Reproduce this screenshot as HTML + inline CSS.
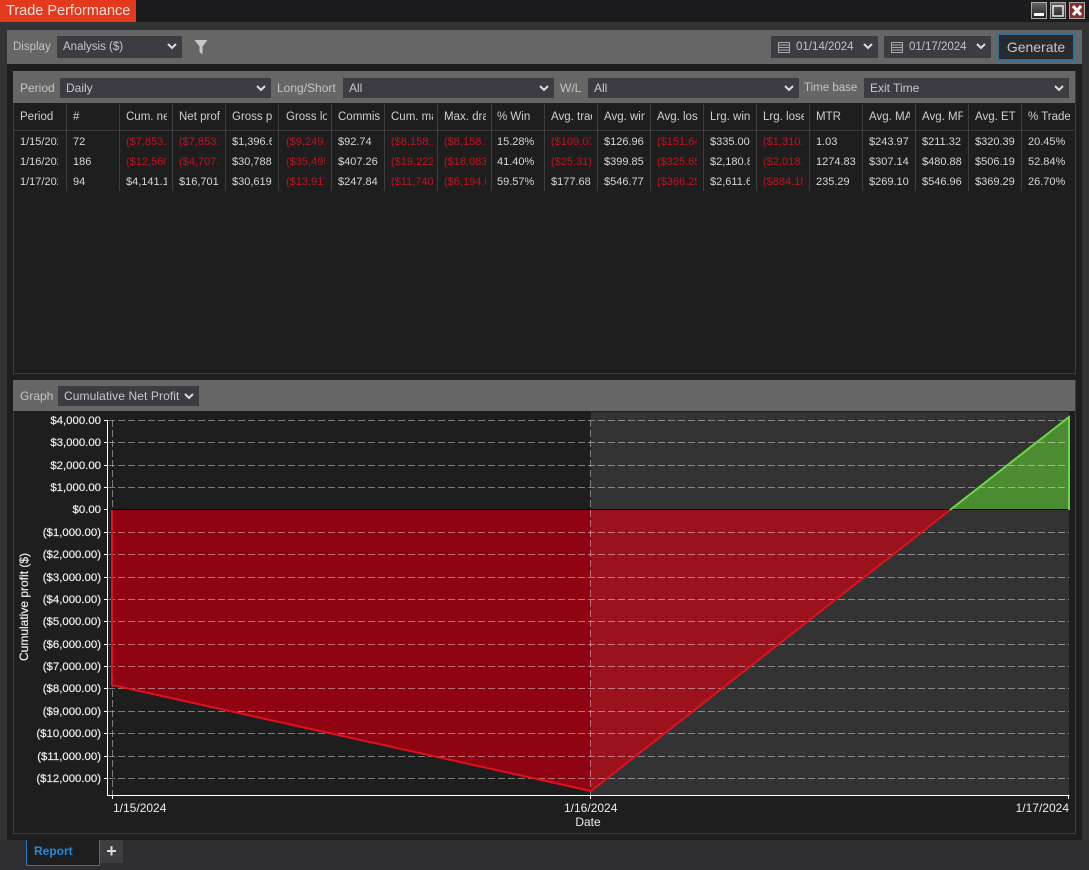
<!DOCTYPE html>
<html><head><meta charset="utf-8">
<style>
html,body{margin:0;padding:0}
body{width:1089px;height:870px;position:relative;overflow:hidden;background:#2e2e30;font-family:"Liberation Sans",sans-serif;font-size:12px;color:#dcdcdc}
.a{position:absolute}
.sel{position:absolute;background:#3c3c42;height:20px;line-height:20px;color:#c8c8c8;box-sizing:border-box;padding-left:6px}
.sel svg{position:absolute;right:4px;top:6px}
.lbl{position:absolute;color:#c4c4c4;line-height:20px}
.bar{position:absolute;background:#666}
.c{position:absolute;height:20px;line-height:20px;margin-top:1px;overflow:hidden;white-space:nowrap;color:#d6d6d6;font-size:11px}
.h{color:#cfcfcf;font-size:11.5px}
.r{color:#c4121f}
.v{position:absolute;width:1px;background:#3e3e3e}
</style></head><body>
<div class="a" style="left:0;top:0;width:1089px;height:22px;background:#1c1c1e"></div>
<div class="a" style="left:0;top:0;width:136px;height:22px;background:#e5391c;color:#f4e2dc;font-size:14.5px;line-height:22px;text-indent:6px;white-space:nowrap">Trade Performance</div>
<svg class="a" style="left:1031px;top:2px" width="58" height="19">
<defs><linearGradient id="wb" x1="0" y1="0" x2="0" y2="1"><stop offset="0" stop-color="#666"/><stop offset="1" stop-color="#222"/></linearGradient></defs>
<rect x=".5" y=".5" width="15" height="16" fill="url(#wb)" stroke="#aaa"/><rect x="3" y="11" width="10" height="3" fill="#fff"/>
<rect x="19.5" y=".5" width="15" height="16" fill="url(#wb)" stroke="#aaa"/><rect x="22" y="4" width="10" height="10" fill="none" stroke="#eee" stroke-width="1.5"/>
<rect x="38.5" y=".5" width="15" height="16" fill="#8a2c28" stroke="#aaa"/><path d="M42 4l8 9M50 4l-8 9" stroke="#fff" stroke-width="3"/>
</svg>
<div class="a" style="left:0;top:22px;width:1089px;height:818px;background:#333"></div>
<div class="a" style="left:7px;top:30px;width:1075px;height:810px;background:#1e1e1e"></div>
<div class="bar" style="left:7px;top:30px;width:1075px;height:34px"></div>
<div class="lbl" style="left:13px;top:37px;font-size:11.5px">Display</div>
<div class="sel" style="left:57px;top:36px;width:125px;height:22px;line-height:22px;font-size:11.5px">Analysis ($)<svg width="12" height="10" style="top:6px"><path d="M2 2l4 4 4-4" fill="none" stroke="#ddd" stroke-width="2"/></svg></div>
<svg class="a" style="left:194px;top:39px" width="14" height="16"><path d="M0.5 1h13l-5 6.500v8l-3-2.500v-5.500z" fill="#c8c8c8"/></svg>
<div class="sel" style="left:771px;top:36px;width:107px;height:22px;line-height:22px;padding-left:25px;color:#c4c4c4;font-size:11.5px">01/14/2024<svg width="12" height="10" style="top:6px"><path d="M2 2l4 4 4-4" fill="none" stroke="#ddd" stroke-width="2"/></svg></div>
<svg class="a" style="left:778px;top:42px" width="12" height="11"><rect x=".5" y=".5" width="11" height="10" fill="none" stroke="#aaa"/><path d="M1 3h10M1 5.500h10M1 8h10" stroke="#aaa"/></svg>
<div class="sel" style="left:884px;top:36px;width:107px;height:22px;line-height:22px;padding-left:25px;color:#c4c4c4;font-size:11.5px">01/17/2024<svg width="12" height="10" style="top:6px"><path d="M2 2l4 4 4-4" fill="none" stroke="#ddd" stroke-width="2"/></svg></div>
<svg class="a" style="left:891px;top:42px" width="12" height="11"><rect x=".5" y=".5" width="11" height="10" fill="none" stroke="#aaa"/><path d="M1 3h10M1 5.500h10M1 8h10" stroke="#aaa"/></svg>
<div class="a" style="left:997px;top:33px;width:78px;height:28px;box-sizing:border-box;border:2px solid #2d6f9f;background:#2a2a2e;color:#c8c8c8;font-size:14px;line-height:24px;text-align:center">Generate</div>

<div class="a" style="left:13px;top:71px;width:1061px;height:301px;border:1px solid #3c3c3c;background:#1e1e1e"></div>
<div class="bar" style="left:13px;top:71px;width:1062px;height:32px"></div>
<div class="lbl" style="left:20px;top:78px">Period</div>
<div class="sel" style="left:60px;top:78px;width:211px">Daily<svg width="12" height="10"><path d="M2 2l4 4 4-4" fill="none" stroke="#ddd" stroke-width="2"/></svg></div>
<div class="lbl" style="left:277px;top:78px">Long/Short</div>
<div class="sel" style="left:343px;top:78px;width:211px">All<svg width="12" height="10"><path d="M2 2l4 4 4-4" fill="none" stroke="#ddd" stroke-width="2"/></svg></div>
<div class="lbl" style="left:560px;top:78px">W/L</div>
<div class="sel" style="left:588px;top:78px;width:211px">All<svg width="12" height="10"><path d="M2 2l4 4 4-4" fill="none" stroke="#ddd" stroke-width="2"/></svg></div>
<div class="lbl" style="left:804px;top:78px;font-size:11.5px">Time base</div>
<div class="sel" style="left:864px;top:78px;width:205px">Exit Time<svg width="12" height="10"><path d="M2 2l4 4 4-4" fill="none" stroke="#ddd" stroke-width="2"/></svg></div>
<div class="a" style="left:14px;top:130px;width:1060px;height:1px;background:#3a3a3a"></div>

<div class="v" style="left:66px;top:104px;height:87px"></div><div class="v" style="left:119px;top:104px;height:87px"></div><div class="v" style="left:172px;top:104px;height:87px"></div><div class="v" style="left:225px;top:104px;height:87px"></div><div class="v" style="left:278px;top:104px;height:87px"></div><div class="v" style="left:331px;top:104px;height:87px"></div><div class="v" style="left:384px;top:104px;height:87px"></div><div class="v" style="left:437px;top:104px;height:87px"></div><div class="v" style="left:491px;top:104px;height:87px"></div><div class="v" style="left:544px;top:104px;height:87px"></div><div class="v" style="left:597px;top:104px;height:87px"></div><div class="v" style="left:650px;top:104px;height:87px"></div><div class="v" style="left:703px;top:104px;height:87px"></div><div class="v" style="left:756px;top:104px;height:87px"></div><div class="v" style="left:809px;top:104px;height:87px"></div><div class="v" style="left:862px;top:104px;height:87px"></div><div class="v" style="left:915px;top:104px;height:87px"></div><div class="v" style="left:968px;top:104px;height:87px"></div><div class="v" style="left:1021px;top:104px;height:87px"></div>

<div class="c h" style="left:20px;top:106px;width:44px">Period</div><div class="c h" style="left:73px;top:106px;width:44px">#</div><div class="c h" style="left:126px;top:106px;width:41px">Cum. net</div><div class="c h" style="left:179px;top:106px;width:41px">Net profit</div><div class="c h" style="left:232px;top:106px;width:41px">Gross profit</div><div class="c h" style="left:286px;top:106px;width:41px">Gross loss</div><div class="c h" style="left:338px;top:106px;width:42px">Commission</div><div class="c h" style="left:391px;top:106px;width:42px">Cum. max</div><div class="c h" style="left:444px;top:106px;width:42px">Max. draw</div><div class="c h" style="left:497px;top:106px;width:42px">% Win</div><div class="c h" style="left:551px;top:106px;width:41px">Avg. trade</div><div class="c h" style="left:604px;top:106px;width:41px">Avg. win</div><div class="c h" style="left:657px;top:106px;width:41px">Avg. loss</div><div class="c h" style="left:710px;top:106px;width:41px">Lrg. win</div><div class="c h" style="left:763px;top:106px;width:41px">Lrg. loser</div><div class="c h" style="left:816px;top:106px;width:41px">MTR</div><div class="c h" style="left:869px;top:106px;width:41px">Avg. MAE</div><div class="c h" style="left:922px;top:106px;width:41px">Avg. MFE</div><div class="c h" style="left:975px;top:106px;width:41px">Avg. ETD</div><div class="c h" style="left:1028px;top:106px;width:42px">% Trades</div>

<div class="c" style="left:20px;top:131px;width:38px">1/15/2024</div><div class="c" style="left:73px;top:131px;width:44px">72</div><div class="c r" style="left:126px;top:131px;width:40px">($7,853.11)</div><div class="c r" style="left:179px;top:131px;width:40px">($7,853.11)</div><div class="c" style="left:232px;top:131px;width:40px">$1,396.60</div><div class="c r" style="left:286px;top:131px;width:39px">($9,249.71)</div><div class="c" style="left:338px;top:131px;width:42px">$92.74</div><div class="c r" style="left:391px;top:131px;width:42px">($8,158.11)</div><div class="c r" style="left:444px;top:131px;width:42px">($8,158.11)</div><div class="c" style="left:497px;top:131px;width:42px">15.28%</div><div class="c r" style="left:551px;top:131px;width:40px">($109.07)</div><div class="c" style="left:604px;top:131px;width:40px">$126.96</div><div class="c r" style="left:657px;top:131px;width:40px">($151.64)</div><div class="c" style="left:710px;top:131px;width:40px">$335.00</div><div class="c r" style="left:763px;top:131px;width:40px">($1,310.00)</div><div class="c" style="left:816px;top:131px;width:42px">1.03</div><div class="c" style="left:869px;top:131px;width:41px">$243.97</div><div class="c" style="left:922px;top:131px;width:41px">$211.32</div><div class="c" style="left:975px;top:131px;width:41px">$320.39</div><div class="c" style="left:1028px;top:131px;width:42px">20.45%</div>

<div class="c" style="left:20px;top:151px;width:38px">1/16/2024</div><div class="c" style="left:73px;top:151px;width:44px">186</div><div class="c r" style="left:126px;top:151px;width:40px">($12,560.00)</div><div class="c r" style="left:179px;top:151px;width:40px">($4,707.00)</div><div class="c" style="left:232px;top:151px;width:40px">$30,788.00</div><div class="c r" style="left:286px;top:151px;width:39px">($35,495.00)</div><div class="c" style="left:338px;top:151px;width:42px">$407.26</div><div class="c r" style="left:391px;top:151px;width:42px">($19,222.00)</div><div class="c r" style="left:444px;top:151px;width:42px">($18,083.00)</div><div class="c" style="left:497px;top:151px;width:42px">41.40%</div><div class="c r" style="left:551px;top:151px;width:40px">($25.31)</div><div class="c" style="left:604px;top:151px;width:40px">$399.85</div><div class="c r" style="left:657px;top:151px;width:40px">($325.65)</div><div class="c" style="left:710px;top:151px;width:40px">$2,180.80</div><div class="c r" style="left:763px;top:151px;width:40px">($2,018.00)</div><div class="c" style="left:816px;top:151px;width:42px">1274.83</div><div class="c" style="left:869px;top:151px;width:41px">$307.14</div><div class="c" style="left:922px;top:151px;width:41px">$480.88</div><div class="c" style="left:975px;top:151px;width:41px">$506.19</div><div class="c" style="left:1028px;top:151px;width:42px">52.84%</div>

<div class="c" style="left:20px;top:171px;width:38px">1/17/2024</div><div class="c" style="left:73px;top:171px;width:44px">94</div><div class="c" style="left:126px;top:171px;width:41px">$4,141.10</div><div class="c" style="left:179px;top:171px;width:40px">$16,701.00</div><div class="c" style="left:232px;top:171px;width:40px">$30,619.00</div><div class="c r" style="left:286px;top:171px;width:39px">($13,917.00)</div><div class="c" style="left:338px;top:171px;width:42px">$247.84</div><div class="c r" style="left:391px;top:171px;width:42px">($11,740.00)</div><div class="c r" style="left:444px;top:171px;width:42px">($6,194.00)</div><div class="c" style="left:497px;top:171px;width:42px">59.57%</div><div class="c" style="left:551px;top:171px;width:40px">$177.68</div><div class="c" style="left:604px;top:171px;width:40px">$546.77</div><div class="c r" style="left:657px;top:171px;width:40px">($366.25)</div><div class="c" style="left:710px;top:171px;width:40px">$2,611.60</div><div class="c r" style="left:763px;top:171px;width:40px">($884.18)</div><div class="c" style="left:816px;top:171px;width:42px">235.29</div><div class="c" style="left:869px;top:171px;width:41px">$269.10</div><div class="c" style="left:922px;top:171px;width:41px">$546.96</div><div class="c" style="left:975px;top:171px;width:41px">$369.29</div><div class="c" style="left:1028px;top:171px;width:42px">26.70%</div>

<div class="a" style="left:13px;top:380px;width:1061px;height:452px;border:1px solid #3c3c3c;background:#1e1e1e"></div>
<div class="bar" style="left:13px;top:380px;width:1062px;height:31px"></div>
<div class="lbl" style="left:20px;top:386px">Graph</div>
<div class="sel" style="left:58px;top:386px;width:141px;letter-spacing:.1px">Cumulative Net Profit<svg width="12" height="10"><path d="M2 2l4 4 4-4" fill="none" stroke="#ddd" stroke-width="2"/></svg></div>

<svg class="a" style="left:0;top:0" width="1089" height="870" font-family="Liberation Sans, sans-serif" font-size="12" fill="#ececec">
<rect x="591" y="412" width="478" height="383" fill="#333"/>
<polygon points="112,510 591,510 591,791 112,685" fill="#900313"/>
<polygon points="591,510 950,510 591,791" fill="#9c121c"/>
<polygon points="950,510 1069,510 1069,417" fill="#4a8c2f"/>
<g stroke="#fff" stroke-opacity=".42" stroke-dasharray="7 3" stroke-width="1" fill="none">
<path d="M108 420.500H1069M108 442.500H1069M108 465.500H1069M108 487.500H1069M108 532.500H1069M108 554.500H1069M108 577.500H1069M108 599.500H1069M108 621.500H1069M108 644.500H1069M108 666.500H1069M108 688.500H1069M108 711.500H1069M108 733.500H1069M108 756.500H1069M108 778.500H1069"/>
<path d="M112.500 420V795M590.500 420V795"/>
</g>
<path d="M112 509.500H1069" stroke="#000" stroke-width="1"/>
<polyline points="112,510 112,685 591,791 950,510" fill="none" stroke="#e0101f" stroke-width="2"/>
<polyline points="950,510 1069,417 1069,510" fill="none" stroke="#6ed64a" stroke-width="2"/>
<path d="M107.500 420V795.500H1069.500" fill="none" stroke="#fff" stroke-width="1"/>
<path d="M104 420.500h3M104 442.500h3M104 465.500h3M104 487.500h3M104 509.500h3M104 532.500h3M104 554.500h3M104 577.500h3M104 599.500h3M104 621.500h3M104 644.500h3M104 666.500h3M104 688.500h3M104 711.500h3M104 733.500h3M104 756.500h3M104 778.500h3M112.500 796v3M590.500 796v3M1068.500 796v3" stroke="#fff"/>
<g text-anchor="end" font-size="11.4" stroke="#ececec" stroke-width=".2">
<text x="101" y="424">$4,000.00</text><text x="101" y="446">$3,000.00</text><text x="101" y="469">$2,000.00</text><text x="101" y="491">$1,000.00</text><text x="101" y="513">$0.00</text><text x="101" y="536">($1,000.00)</text><text x="101" y="558">($2,000.00)</text><text x="101" y="581">($3,000.00)</text><text x="101" y="603">($4,000.00)</text><text x="101" y="625">($5,000.00)</text><text x="101" y="648">($6,000.00)</text><text x="101" y="670">($7,000.00)</text><text x="101" y="692">($8,000.00)</text><text x="101" y="715">($9,000.00)</text><text x="101" y="737">($10,000.00)</text><text x="101" y="760">($11,000.00)</text><text x="101" y="782">($12,000.00)</text>
</g>
<text x="113" y="812">1/15/2024</text>
<text x="564" y="812">1/16/2024</text>
<text x="1069" y="812" text-anchor="end">1/17/2024</text>
<text x="588" y="826" text-anchor="middle">Date</text>
<text transform="translate(28,607) rotate(-90)" text-anchor="middle" stroke="#ececec" stroke-width=".2">Cumulative profit ($)</text>
</svg>

<div class="a" style="left:26px;top:840px;width:74px;height:26px;box-sizing:border-box;border:1px solid #1f78c1;border-top:none;background:#1e1e1e;color:#1f8ae0;font-weight:bold;font-size:12px;line-height:22px;padding-left:7px">Report</div>
<div class="a" style="left:100px;top:840px;width:23px;height:23px;background:#3e3e42;color:#ddd;font-size:18px;font-weight:bold;line-height:23px;text-align:center">+</div>
</body></html>
